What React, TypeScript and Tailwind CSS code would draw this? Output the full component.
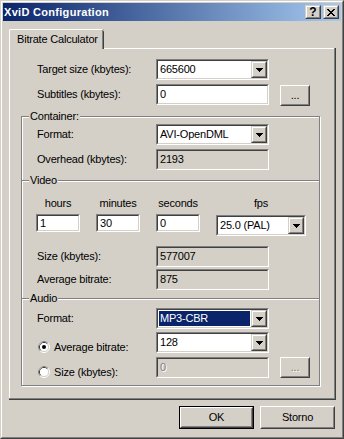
import React from "react";

const font = "font-['Liberation_Sans',Arial,sans-serif]";

function Arrow({ color = "#000" }: { color?: string }) {
  return (
    <svg width="7" height="4" viewBox="0 0 7 4" shapeRendering="crispEdges">
      <rect x="0" y="0" width="7" height="1" fill={color} />
      <rect x="1" y="1" width="5" height="1" fill={color} />
      <rect x="2" y="2" width="3" height="1" fill={color} />
      <rect x="3" y="3" width="1" height="1" fill={color} />
    </svg>
  );
}

function CloseGlyph() {
  const rows = [
    "XX....XX",
    ".XX..XX.",
    "..XXXX..",
    "...XX...",
    "..XXXX..",
    ".XX..XX.",
    "XX....XX",
  ];
  return (
    <svg width="8" height="7" viewBox="0 0 8 7" shapeRendering="crispEdges">
      {rows.map((r, y) =>
        r.split("").map((c, x) =>
          c === "X" ? <rect key={`${x}-${y}`} x={x} y={y} width="1" height="1" fill="#000" /> : null
        )
      )}
    </svg>
  );
}

function CapButton({ children, className = "" }: { children: React.ReactNode; className?: string }) {
  return (
    <div className={`w-[16px] h-[14px] shrink-0 border border-t-[#d4d0c8] border-l-[#d4d0c8] border-b-[#404040] border-r-[#404040] ${className}`}>
      <div className="h-full border border-t-white border-l-white border-b-[#808080] border-r-[#808080] bg-[#d4d0c8] flex items-center justify-center">
        {children}
      </div>
    </div>
  );
}

function DropButton() {
  return (
    <div className="w-[16px] h-full shrink-0 border border-t-[#d4d0c8] border-l-[#d4d0c8] border-b-[#404040] border-r-[#404040]">
      <div className="h-full border border-t-white border-l-white border-b-[#808080] border-r-[#808080] bg-[#d4d0c8] flex items-center justify-center">
        <Arrow />
      </div>
    </div>
  );
}

function Combo({ value, className, selected }: { value: string; className: string; selected?: boolean }) {
  return (
    <div className={`${className} h-[21px] shrink-0 border border-t-[#808080] border-l-[#808080] border-b-white border-r-white`}>
      <div className="h-full flex border border-t-[#404040] border-l-[#404040] border-b-[#d4d0c8] border-r-[#d4d0c8] bg-white">
        <div className="flex-1 flex items-stretch p-[1px] min-w-0">
          <div className={`flex-1 flex items-center pl-[1px] whitespace-nowrap ${selected ? "bg-[#0a246a] text-white" : "text-black"}`}>
            {value}
          </div>
        </div>
        <DropButton />
      </div>
    </div>
  );
}

function Edit({
  value,
  className,
  variant = "normal",
}: {
  value: string;
  className: string;
  variant?: "normal" | "readonly" | "disabled";
}) {
  const bg = variant === "normal" ? "bg-white" : "bg-[#d4d0c8]";
  const txt = variant === "disabled" ? "text-[#808080] [text-shadow:1px_1px_0_#fff]" : "text-black";
  return (
    <div className={`${className} shrink-0 border border-t-[#808080] border-l-[#808080] border-b-white border-r-white`}>
      <div className={`h-full flex items-center pl-[2px] border border-t-[#404040] border-l-[#404040] border-b-[#d4d0c8] border-r-[#d4d0c8] ${bg} ${txt}`}>
        {value}
      </div>
    </div>
  );
}

function PushButton({
  children,
  className,
  disabled,
}: {
  children: React.ReactNode;
  className: string;
  disabled?: boolean;
}) {
  return (
    <div className={`${className} shrink-0 border border-t-white border-l-white border-b-[#404040] border-r-[#404040]`}>
      <div
        className={`h-full border border-t-[#d4d0c8] border-l-[#d4d0c8] border-b-[#808080] border-r-[#808080] bg-[#d4d0c8] flex items-center justify-center ${
          disabled ? "text-[#808080] [text-shadow:1px_1px_0_#fff]" : "text-black"
        }`}
      >
        {children}
      </div>
    </div>
  );
}

function DefaultButton({ children, className }: { children: React.ReactNode; className: string }) {
  return (
    <div className={`${className} shrink-0 border border-black`}>
      <div className="h-full border border-t-white border-l-white border-b-[#404040] border-r-[#404040]">
        <div className="h-full border border-t-[#d4d0c8] border-l-[#d4d0c8] border-b-[#808080] border-r-[#808080] bg-[#d4d0c8] flex items-center justify-center">
          {children}
        </div>
      </div>
    </div>
  );
}

function Radio({ checked }: { checked?: boolean }) {
  return (
    <svg width="12" height="12" viewBox="0 0 12 12" className="shrink-0">
      <circle cx="6" cy="6" r="5.5" fill="none" stroke="#fff" strokeWidth="1" />
      <path d="M2.11 9.89 A5.5 5.5 0 0 1 9.89 2.11" fill="none" stroke="#808080" strokeWidth="1" />
      <circle cx="6" cy="6" r="4.5" fill="none" stroke="#d4d0c8" strokeWidth="1" />
      <path d="M2.82 9.18 A4.5 4.5 0 0 1 9.18 2.82" fill="none" stroke="#404040" strokeWidth="1" />
      <circle cx="6" cy="6" r="4" fill="#fff" />
      {checked ? <circle cx="6" cy="6" r="2" fill="#000" /> : null}
    </svg>
  );
}

function Separator({ label, className }: { label: string; className: string }) {
  return (
    <div className={`relative h-[2px] shrink-0 border-t border-b border-t-[#808080] border-b-white ${className}`}>
      <span className="absolute left-[7px] top-[-7px] px-[1px] bg-[#d4d0c8] leading-[13px] whitespace-nowrap">{label}</span>
    </div>
  );
}

export default function App() {
  return (
    <div
      className={`w-[344px] h-[439px] bg-[#d4d0c8] ${font} text-[11px] leading-[13px] tracking-[-0.2px] text-black border border-t-[#d4d0c8] border-l-[#d4d0c8] border-b-[#404040] border-r-[#404040]`}
    >
      <div className="h-full border border-t-white border-l-white border-b-[#808080] border-r-[#808080] p-[1px] flex flex-col">
        {/* Title bar */}
        <div className="h-[18px] shrink-0 flex items-center bg-[linear-gradient(to_right,#0a246a,#a6caf0)] pl-[1px] pr-[2px]">
          <span className="flex-1 text-white font-bold tracking-[0.3px] whitespace-nowrap">XviD Configuration</span>
          <CapButton>
            <span className="font-bold text-[12px] leading-[12px] tracking-normal">?</span>
          </CapButton>
          <CapButton className="ml-[2px]">
            <CloseGlyph />
          </CapButton>
        </div>

        {/* Tab strip */}
        <div className="mt-[8px] ml-[6px] h-[19px] shrink-0">
          <div className="relative z-10 w-[95px] h-[20px] bg-[#d4d0c8] rounded-t-[2px] shadow-[inset_1px_0_0_#fff,inset_0_1px_0_#fff,inset_-1px_0_0_#404040,inset_-2px_0_0_#808080] flex items-center pl-[8px] whitespace-nowrap">
            Bitrate Calculator
          </div>
        </div>

        {/* Tab panel */}
        <div className="ml-[6px] w-[327px] h-[352px] shrink-0 flex flex-col shadow-[inset_-1px_-1px_0_#404040,inset_-2px_-2px_0_#808080,inset_1px_1px_0_#fff]">
          <div className="mt-[11px] h-[21px] flex items-center pl-[28px]">
            <div className="w-[119px] whitespace-nowrap">Target size (kbytes):</div>
            <Combo value="665600" className="w-[113px]" />
          </div>
          <div className="mt-[4px] h-[21px] flex items-start pl-[28px]">
            <div className="w-[119px] h-full flex items-center whitespace-nowrap">Subtitles (kbytes):</div>
            <Edit value="0" className="w-[113px] h-[21px]" />
            <PushButton className="ml-[11px] mt-[1px] w-[30px] h-[21px]">...</PushButton>
          </div>

          {/* Group box */}
          <div className="relative mt-[11px] ml-[12px] w-[299px] h-[270px] shrink-0 border border-[#808080] shadow-[inset_1px_1px_0_#fff,1px_1px_0_#fff] flex flex-col">
            <span className="absolute left-[7px] top-[-7px] px-[1px] bg-[#d4d0c8] leading-[13px] whitespace-nowrap">Container:</span>

            <div className="mt-[7px] h-[21px] flex items-center pl-[15px]">
              <div className="w-[119px] whitespace-nowrap">Format:</div>
              <Combo value="AVI-OpenDML" className="w-[113px]" />
            </div>
            <div className="mt-[4px] h-[21px] flex items-center pl-[15px]">
              <div className="w-[119px] whitespace-nowrap">Overhead (kbytes):</div>
              <Edit value="2193" variant="readonly" className="w-[113px] h-[21px]" />
            </div>

            <Separator label="Video" className="mt-[10px]" />

            <div className="mt-[15px] h-[14px] flex pl-[14px] gap-[16px]">
              <div className="w-[44px] text-center">hours</div>
              <div className="w-[44px] text-center">minutes</div>
              <div className="w-[44px] text-center">seconds</div>
              <div className="w-[90px] text-center">fps</div>
            </div>
            <div className="mt-[3px] h-[22px] flex items-start pl-[14px] gap-[16px]">
              <Edit value="1" className="w-[44px] h-[18px]" />
              <Edit value="30" className="w-[44px] h-[18px]" />
              <Edit value="0" className="w-[44px] h-[18px]" />
              <Combo value="25.0 (PAL)" className="w-[90px] mt-[1px]" />
            </div>
            <div className="mt-[10px] h-[21px] flex items-center pl-[15px]">
              <div className="w-[119px] whitespace-nowrap">Size (kbytes):</div>
              <Edit value="577007" variant="readonly" className="w-[113px] h-[21px]" />
            </div>
            <div className="mt-[2px] h-[21px] flex items-center pl-[15px]">
              <div className="w-[119px] whitespace-nowrap">Average bitrate:</div>
              <Edit value="875" variant="readonly" className="w-[113px] h-[21px]" />
            </div>

            <Separator label="Audio" className="mt-[8px]" />

            <div className="mt-[8px] h-[21px] flex items-center pl-[15px]">
              <div className="w-[119px] whitespace-nowrap">Format:</div>
              <Combo value="MP3-CBR" selected className="w-[113px]" />
            </div>
            <div className="mt-[3px] h-[21px] flex items-start pl-[16px]">
              <div className="w-[118px] h-[12px] mt-[9px] flex items-center gap-[4px] whitespace-nowrap">
                <Radio checked />
                <span>Average bitrate:</span>
              </div>
              <Combo value="128" className="w-[113px]" />
            </div>
            <div className="mt-[4px] h-[21px] flex items-start pl-[16px]">
              <div className="w-[118px] h-[12px] mt-[9px] flex items-center gap-[4px] whitespace-nowrap">
                <Radio />
                <span>Size (kbytes):</span>
              </div>
              <Edit value="0" variant="disabled" className="w-[113px] h-[21px]" />
              <PushButton disabled className="ml-[11px] w-[30px] h-[21px]">...</PushButton>
            </div>
          </div>
        </div>

        {/* Buttons */}
        <div className="mt-[6px] h-[23px] shrink-0 flex justify-end gap-[6px] pr-[6px]">
          <DefaultButton className="w-[75px] h-[23px]">OK</DefaultButton>
          <PushButton className="w-[75px] h-[23px]">Storno</PushButton>
        </div>
      </div>
    </div>
  );
}
